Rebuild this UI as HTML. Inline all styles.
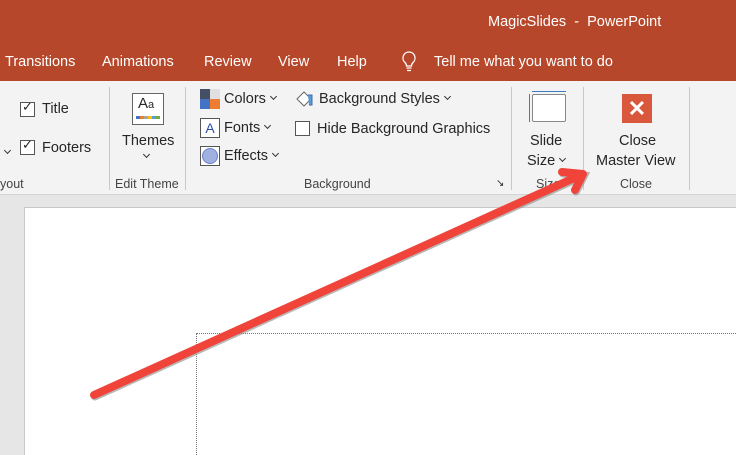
<!DOCTYPE html>
<html style="width:736px;height:455px;overflow:hidden"><head><meta charset="utf-8"><style>
*{margin:0;padding:0;box-sizing:border-box}
body{width:736px;height:455px;overflow:hidden;background:#e6e6e6;font-family:"Liberation Sans",sans-serif;position:relative}
.t{position:absolute;white-space:nowrap}
#top{position:absolute;left:0;top:0;width:736px;height:81px;background:#b7472a;color:#fff}
#rib{position:absolute;left:0;top:81px;width:736px;height:114px;background:#f3f3f3;border-bottom:1px solid #d4d4d4;color:#262626;font-size:14.5px}
.sep{position:absolute;top:6px;width:1px;height:103px;background:#c8c8c8}
.lbl{font-size:12.5px;color:#444;top:96px}
.cb{position:absolute;width:15px;height:15px;border:1px solid #555;background:#fff}
.ch{display:inline-block;width:5px;height:5px;border-right:1.2px solid #333;border-bottom:1.2px solid #333;transform:rotate(45deg);margin-left:5px;vertical-align:4px}
</style></head><body>
<div id="top">
<div class="t" style="left:488px;top:14px;font-size:14.5px">MagicSlides&nbsp; - &nbsp;PowerPoint</div>
<div class="t" style="left:5px;top:54px;font-size:14.5px">Transitions</div>
<div class="t" style="left:102px;top:54px;font-size:14.5px">Animations</div>
<div class="t" style="left:204px;top:54px;font-size:14.5px">Review</div>
<div class="t" style="left:278px;top:54px;font-size:14.5px">View</div>
<div class="t" style="left:337px;top:54px;font-size:14.5px">Help</div>
<svg style="position:absolute;left:401px;top:51px" width="16" height="22"><path d="M8 1a6 6 0 0 0-4 10.5c1 1 1.5 2 1.5 3.5h5c0-1.5.5-2.5 1.5-3.5A6 6 0 0 0 8 1z M5.5 17h5 M6 19.5h4" fill="none" stroke="#fff" stroke-width="1.3"/></svg>
<div class="t" style="left:434px;top:54px;font-size:14.5px">Tell me what you want to do</div>
</div>
<div id="rib">
<div class="t" style="left:0px;top:64px"><span class="ch"></span></div>
<div class="cb" style="left:20px;top:21px"></div><div class="t" style="left:22px;top:18px;font-size:13px">✓</div>
<div class="t" style="left:42px;top:20px">Title</div>
<div class="cb" style="left:20px;top:59px"></div><div class="t" style="left:22px;top:56px;font-size:13px">✓</div>
<div class="t" style="left:42px;top:59px">Footers</div>
<div class="t lbl" style="left:0">yout</div>
<div class="sep" style="left:109px"></div>
<div style="position:absolute;left:132px;top:12px;width:32px;height:32px;border:1px solid #666;background:#fff"></div>
<div class="t" style="left:138px;top:14px;font-size:15px">A<span style="font-size:11px">a</span></div>
<div style="position:absolute;left:136px;top:35px;width:24px;height:3px;background:linear-gradient(90deg,#4472c4 0 17%,#ed7d31 17% 33%,#a5a5a5 33% 50%,#ffc000 50% 67%,#5b9bd5 67% 83%,#70ad47 83%)"></div>
<div class="t" style="left:122px;top:52px">Themes</div>
<div class="t" style="left:139px;top:68px"><span class="ch"></span></div>
<div class="t lbl" style="left:115px">Edit Theme</div>
<div class="sep" style="left:185px"></div>
<div style="position:absolute;left:200px;top:8px;width:20px;height:20px;background:linear-gradient(#445066 0 50%,#4472c4 50%);"><div style="position:absolute;right:0;top:0;width:10px;height:10px;background:#e0e0e0"></div><div style="position:absolute;right:0;bottom:0;width:10px;height:10px;background:#ed7d31"></div></div>
<div class="t" style="left:224px;top:10px">Colors<span class="ch"></span></div>
<div style="position:absolute;left:200px;top:37px;width:20px;height:20px;border:1px solid #555;background:#fff;font-size:14px;text-align:center;line-height:18px;color:#2b4fa8">A</div>
<div class="t" style="left:224px;top:39px">Fonts<span class="ch"></span></div>
<div style="position:absolute;left:200px;top:65px;width:20px;height:20px;border:1px solid #555;background:#fff"><div style="margin:1px;width:16px;height:16px;border-radius:50%;background:#9fb1e0;border:1px solid #6b82c4"></div></div>
<div class="t" style="left:224px;top:67px">Effects<span class="ch"></span></div>
<svg style="position:absolute;left:295px;top:8px" width="20" height="20"><path d="M2 10l7-7 7 7-7 7z" fill="#fff" stroke="#666"/><path d="M13 6h4v10h-3" fill="#5b9bd5" stroke="#3d6fa8"/></svg>
<div class="t" style="left:319px;top:10px">Background Styles<span class="ch"></span></div>
<div class="cb" style="left:295px;top:40px"></div>
<div class="t" style="left:317px;top:40px">Hide Background Graphics</div>
<div class="t lbl" style="left:304px">Background</div>
<div class="t" style="left:496px;top:97px;font-size:10px">↘</div>
<div class="sep" style="left:511px"></div>
<div style="position:absolute;left:532px;top:13px;width:34px;height:28px;border:1px solid #888;background:#fff;border-radius:2px"></div>
<div style="position:absolute;left:532px;top:10px;width:34px;height:1px;background:#3d7dc4"></div>
<div style="position:absolute;left:529px;top:13px;width:1px;height:28px;background:#3d7dc4"></div>
<div class="t" style="left:530px;top:52px">Slide</div>
<div class="t" style="left:527px;top:72px">Size<span class="ch"></span></div>
<div class="t lbl" style="left:536px">Size</div>
<div class="sep" style="left:583px"></div>
<div style="position:absolute;left:622px;top:13px;width:30px;height:29px;background:#d9583b;color:#fff;font-size:22px;font-weight:bold;text-align:center;line-height:29px">✕</div>
<div class="t" style="left:619px;top:52px">Close</div>
<div class="t" style="left:596px;top:72px">Master View</div>
<div class="t lbl" style="left:620px">Close</div>
<div class="sep" style="left:689px"></div>
</div>
<div style="position:absolute;left:24px;top:207px;width:720px;height:250px;background:#fff;border:1px solid #c8c8c8"></div>
<div style="position:absolute;left:196px;top:333px;width:560px;height:130px;border:1px dotted #777"></div>
<svg style="position:absolute;left:0;top:0" width="736" height="455">
<g stroke="#888" stroke-width="8" stroke-linecap="round" fill="none" opacity=".6" transform="translate(1,1.5)"><path d="M94 395L583 174M562 172L583 174L575 190"/></g>
<g stroke="#f0443a" stroke-width="8" stroke-linecap="round" stroke-linejoin="round" fill="none"><path d="M94 395L583 174M562 172L583 174L575 190"/></g>
</svg>
</body></html>
